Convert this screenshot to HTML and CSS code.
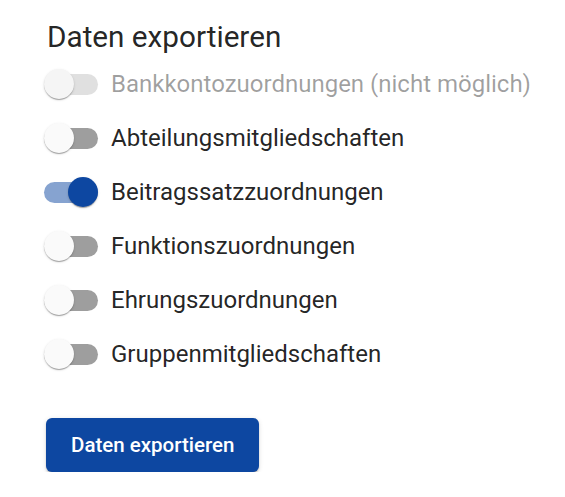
FILE: index.html
```html
<!DOCTYPE html>
<html lang="de">
<head>
<meta charset="utf-8">
<title>Daten exportieren</title>
<link rel="stylesheet" href="styles.css">
</head>
<body>
<section class="panel">
  <h2 class="title">Daten exportieren</h2>
  <ul class="options">
    <li class="option is-disabled"><span class="switch"><span class="thumb"></span></span><span class="label">Bankkontozuordnungen (nicht möglich)</span></li>
    <li class="option"><span class="switch"><span class="thumb"></span></span><span class="label">Abteilungsmitgliedschaften</span></li>
    <li class="option is-checked"><span class="switch"><span class="thumb"></span></span><span class="label">Beitragssatzzuordnungen</span></li>
    <li class="option"><span class="switch"><span class="thumb"></span></span><span class="label">Funktionszuordnungen</span></li>
    <li class="option"><span class="switch"><span class="thumb"></span></span><span class="label">Ehrungszuordnungen</span></li>
    <li class="option"><span class="switch"><span class="thumb"></span></span><span class="label">Gruppenmitgliedschaften</span></li>
  </ul>
  <button class="export-btn" type="button">Daten exportieren</button>
</section>
</body>
</html>
```
FILE: styles.css
```css
* { box-sizing: border-box; }
html, body { margin: 0; padding: 0; background: #fff; }
body {
  font-family: Roboto, "Noto Sans", Arial, sans-serif;
  color: rgba(0, 0, 0, 0.87);
}
.panel {
  padding: 20px 0 0 44px;
}
.title {
  margin: 0 0 0 3px;
  font-size: 29.7px;
  font-weight: 400;
  line-height: 33px;
  height: 37px;
}
.options {
  list-style: none;
  margin: 0;
  padding: 0;
}
.option {
  display: flex;
  align-items: center;
  height: 54px;
  gap: 13px;
}
.switch {
  position: relative;
  flex: none;
  width: 54px;
  height: 30px;
  display: flex;
  align-items: center;
}
.switch::before {
  content: "";
  display: block;
  width: 54px;
  height: 21px;
  border-radius: 11px;
  background: #9e9e9e;
}
.thumb {
  position: absolute;
  top: 0;
  left: 0;
  width: 30px;
  height: 30px;
  border-radius: 50%;
  background: #fafafa;
  box-shadow: 0 2px 1px -1px rgba(0,0,0,0.2), 0 1px 1px 0 rgba(0,0,0,0.14), 0 1px 3px 0 rgba(0,0,0,0.12);
}
.label {
  font-size: 24px;
  line-height: 28px;
}
.is-checked .switch::before { background: #86a3d0; }
.is-checked .thumb { left: 24px; background: #0d47a1; }
.is-disabled .switch::before { background: #e0e0e0; }
.is-disabled .thumb { background: #f5f5f5; }
.is-disabled .label { color: rgba(0, 0, 0, 0.38); }

.export-btn {
  margin: 37px 0 0 2px;
  height: 54px;
  padding: 0 25px;
  border: 0;
  border-radius: 6px;
  background: #0d47a1;
  color: #fff;
  font-family: Roboto, "Noto Sans", Arial, sans-serif;
  font-size: 20.5px;
  font-weight: 500;
  letter-spacing: 0;
  box-shadow: 0 3px 1px -2px rgba(0,0,0,0.2), 0 2px 2px 0 rgba(0,0,0,0.14), 0 1px 5px 0 rgba(0,0,0,0.12);
  cursor: pointer;
}
```
